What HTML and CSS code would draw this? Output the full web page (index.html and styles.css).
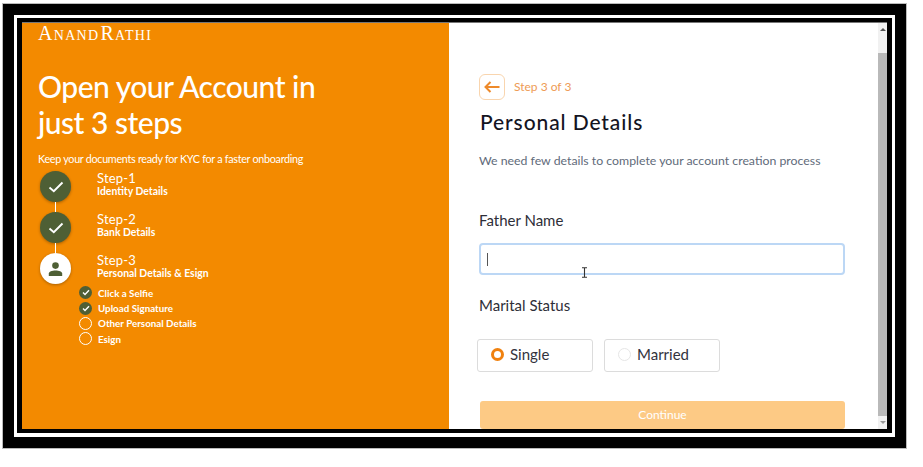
FILE: index.html
```html
<!DOCTYPE html>
<html lang="en">
<head>
  <meta charset="UTF-8" />
  <meta name="viewport" content="width=device-width, initial-scale=1.0" />
  <title>Anand Rathi - Personal Details</title>
  <link rel="stylesheet" href="styles.css">
</head>
<body>
  <div class="frame-outer">
    <div class="frame-white">
      <div class="frame-inner">
        <div class="window">
          <aside class="promo">
            <div class="logo">Anand<span class="logo-gap">Rathi</span></div>
            <h1>Open your Account in<br>just 3 steps</h1>
            <p class="promo-note">Keep your documents ready for KYC for a faster onboarding</p>

            <div class="step">
              <div class="step-circle done">
                <svg width="16" height="12" viewBox="0 0 16 12"><path d="M1.5 6.5 L5.8 10.2 L14.5 1.5" fill="none" stroke="#fff" stroke-width="1.9"/></svg>
              </div>
              <div class="step-text">
                <span class="step-no">Step-1</span>
                <strong>Identity Details</strong>
              </div>
            </div>
            <div class="step">
              <div class="step-circle done">
                <svg width="16" height="12" viewBox="0 0 16 12"><path d="M1.5 6.5 L5.8 10.2 L14.5 1.5" fill="none" stroke="#fff" stroke-width="1.9"/></svg>
              </div>
              <div class="step-text">
                <span class="step-no">Step-2</span>
                <strong>Bank Details</strong>
              </div>
            </div>
            <div class="step">
              <div class="step-circle current">
                <svg width="15" height="14" viewBox="0 0 15 14"><circle cx="7.5" cy="3.6" r="3.3" fill="#4e5f35"/><path d="M0.8 14 V11.6 C0.8 9.4 4 8.4 7.5 8.4 C11 8.4 14.2 9.4 14.2 11.6 V14 Z" fill="#4e5f35"/></svg>
              </div>
              <div class="step-text">
                <span class="step-no">Step-3</span>
                <strong>Personal Details &amp; Esign</strong>
              </div>
            </div>

            <ul class="substeps">
              <li>
                <span class="tick done"><svg width="8" height="7" viewBox="0 0 8 7"><path d="M1 3.6 L3 5.5 L7 1.2" fill="none" stroke="#fff" stroke-width="1.4"/></svg></span>
                Click a Selfie
              </li>
              <li>
                <span class="tick done"><svg width="8" height="7" viewBox="0 0 8 7"><path d="M1 3.6 L3 5.5 L7 1.2" fill="none" stroke="#fff" stroke-width="1.4"/></svg></span>
                Upload Signature
              </li>
              <li><span class="tick"></span>Other Personal Details</li>
              <li><span class="tick"></span>Esign</li>
            </ul>
          </aside>

          <section class="form-page">
            <div class="step-back">
              <button class="back-btn">
                <svg width="16" height="12" viewBox="0 0 16 12"><path d="M15.5 6 H1.5 M6.5 1 L1.5 6 L6.5 11" fill="none" stroke="#ee8a2a" stroke-width="2"/></svg>
              </button>
              <span class="step-count">Step 3 of 3</span>
            </div>
            <h2>Personal Details</h2>
            <p class="form-note">We need few details to complete your account creation process</p>

            <label class="field-label">Father Name</label>
            <div class="text-input">
              <span class="caret"></span>
              <svg class="ibeam" width="7" height="11" viewBox="0 0 7 11"><path d="M1 0.7 H6 M1 10.3 H6 M3.5 0.7 V10.3" fill="none" stroke="#333" stroke-width="1.1"/></svg>
            </div>

            <label class="field-label status-label">Marital Status</label>
            <div class="radio-row">
              <div class="radio-card"><span class="radio on"></span>Single</div>
              <div class="radio-card"><span class="radio"></span>Married</div>
            </div>

            <button class="continue-btn">Continue</button>
          </section>

          <div class="scrollbar">
            <span class="arrow up"></span>
            <div class="thumb"></div>
            <span class="arrow down"></span>
          </div>
        </div>
      </div>
    </div>
  </div>
</body>
</html>
```

FILE: styles.css
```css
* {
  box-sizing: border-box;
  margin: 0;
  padding: 0;
}

html, body {
  height: 100%;
  overflow: hidden;
  background: #fff;
}

body {
  font-family: "Lato", sans-serif;
  padding: 4px 17px 18px 3px;
}

.frame-outer {
  height: 444px;
  border: 11px solid #000;
  outline: 1px solid #bbb;
}

.frame-white {
  height: 100%;
  border: 3px solid #fff;
  border-bottom-width: 4px;
}

.frame-inner {
  height: 100%;
  border: 5px solid #000;
  border-top-width: 4px;
  border-bottom-width: 4px;
}

.window {
  display: flex;
  height: 100%;
  background: #fff;
  border-top: 1px solid #777;
  overflow: hidden;
}

/* left orange side */
.promo {
  width: 427px;
  flex-shrink: 0;
  background: #f38a00;
  color: #fff;
  padding: 2px 0 0 16px;
}

.logo {
  font-family: "Liberation Serif", serif;
  font-variant: small-caps;
  font-size: 20px;
  line-height: 16px;
  letter-spacing: 1.3px;
}

.logo-gap {
  margin-left: 1px;
}

.promo h1 {
  font-size: 30px;
  font-weight: 500;
  line-height: 36px;
  letter-spacing: -0.5px;
  margin-top: 27px;
}

.promo-note {
  font-size: 10.8px;
  line-height: 14px;
  letter-spacing: -0.3px;
  margin-top: 12px;
}

.step {
  display: flex;
  align-items: flex-start;
  height: 41px;
  margin-left: 2px;
  position: relative;
}

.promo-note + .step {
  margin-top: 5px;
}

.step-circle {
  width: 31px;
  height: 31px;
  border-radius: 50%;
  display: flex;
  align-items: center;
  justify-content: center;
  box-shadow: 0 1px 3px rgba(0, 0, 0, 0.3);
  flex-shrink: 0;
}

.step-circle.done {
  background: #4e5f35;
}

.step-circle.current {
  background: #fff;
}

.step + .step::before {
  content: "";
  position: absolute;
  left: 15px;
  top: -10px;
  width: 1px;
  height: 10px;
  background: #fff;
}

.step-text {
  margin-left: 26px;
  display: flex;
  flex-direction: column;
}

.step-no {
  font-size: 13px;
  line-height: 14px;
  letter-spacing: 0.2px;
}

.step-text strong {
  font-size: 10.4px;
  line-height: 12px;
  font-weight: 700;
}

.substeps {
  list-style: none;
  margin: -9px 0 0 41px;
}

.substeps li {
  display: flex;
  align-items: center;
  height: 15.4px;
  font-size: 9.8px;
  font-weight: 700;
}

.tick {
  width: 13px;
  height: 13px;
  border-radius: 50%;
  border: 1.5px solid #fff;
  margin-right: 6px;
  display: flex;
  align-items: center;
  justify-content: center;
}

.tick.done {
  background: #4e5f35;
  border: none;
}

/* right form side */
.form-page {
  flex: 1;
  padding: 51px 0 0 30px;
  overflow: hidden;
}

.step-back {
  display: flex;
  align-items: center;
  gap: 9px;
  font-size: 12px;
  color: #ee9b55;
}

.step-count {
  padding-bottom: 2px;
}

.back-btn {
  width: 26px;
  height: 26px;
  background: #fff;
  border: 1px solid #f9d5ae;
  border-radius: 6px;
  display: flex;
  align-items: center;
  justify-content: center;
}

.form-page h2 {
  font-size: 21px;
  font-weight: 500;
  line-height: 26px;
  letter-spacing: 0.9px;
  color: #14141f;
  margin: 9px 0 0 1px;
}

.form-note {
  font-size: 12.3px;
  line-height: 16px;
  color: #5f6b7a;
  margin-top: 18px;
}

.field-label {
  display: block;
  font-size: 15px;
  line-height: 18px;
  color: #2e2e38;
  margin-top: 42px;
}

.status-label {
  margin-top: 21px;
}

.text-input {
  position: relative;
  width: 366px;
  height: 32px;
  margin-top: 14px;
  border: 2px solid #bcd7f5;
  border-radius: 4px;
  background: #fff;
  display: flex;
  align-items: center;
  padding-left: 6px;
}

.caret {
  width: 1px;
  height: 13px;
  background: #555;
}

.ibeam {
  position: absolute;
  left: 100px;
  top: 22px;
}

.radio-row {
  display: flex;
  gap: 11px;
  margin: 25px 0 0 -2px;
}

.radio-card {
  width: 116px;
  height: 33px;
  border: 1px solid #dcdcdc;
  border-radius: 3px;
  display: flex;
  align-items: center;
  padding: 0 0 3px 13px;
  font-size: 15px;
  color: #33333d;
}

.radio {
  width: 13px;
  height: 13px;
  border-radius: 50%;
  border: 1px solid #e6e6e6;
  margin-right: 6px;
}

.radio.on {
  border: 3.5px solid #f0810f;
}

.continue-btn {
  display: block;
  width: 365px;
  height: 28px;
  margin: 29px 0 0 1px;
  padding-bottom: 2px;
  border: none;
  border-radius: 3px;
  background: #fdca85;
  color: #fff;
  font-family: inherit;
  font-size: 12px;
}

.scrollbar {
  width: 9px;
  flex-shrink: 0;
  background: #f1f1f1;
  display: flex;
  flex-direction: column;
  align-items: center;
  justify-content: space-between;
}

.arrow {
  display: block;
  width: 0;
  height: 0;
  border-left: 3px solid transparent;
  border-right: 3px solid transparent;
  margin: 5px 0;
}

.arrow.up {
  border-bottom: 3px solid #555;
}

.arrow.down {
  border-top: 3px solid #999;
}

.thumb {
  width: 100%;
  flex: 1;
  margin: 17px 0 0;
  background: #b9b9b9;
}
```
